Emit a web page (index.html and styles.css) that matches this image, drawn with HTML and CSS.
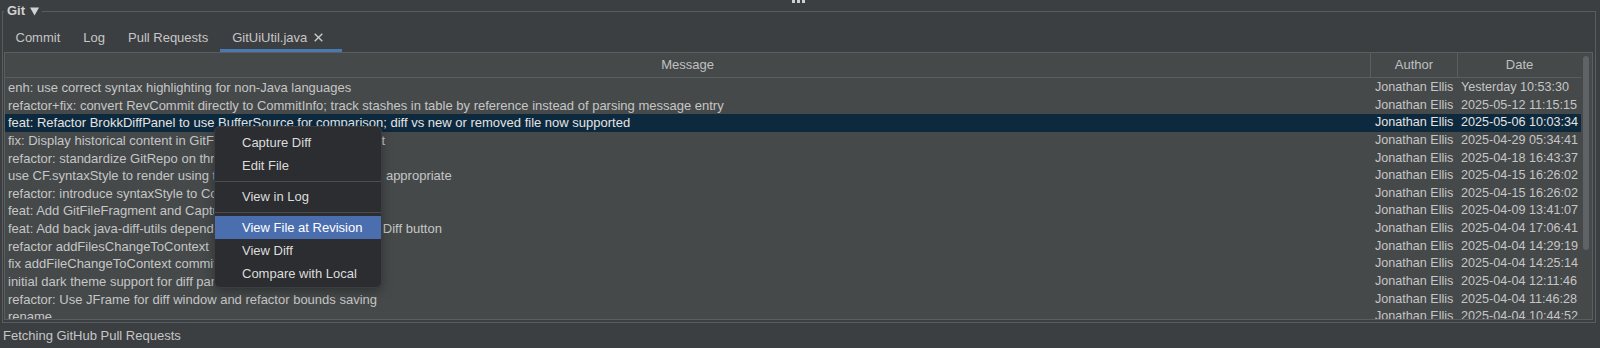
FILE: index.html
```html
<!DOCTYPE html>
<html lang="en">
<head>
<meta charset="utf-8">
<title>Git</title>
<link rel="stylesheet" href="styles.css">
</head>
<body>
<div class="grip"><i></i><i></i><i></i></div>
<fieldset class="git">
  <legend class="git-title">Git<svg class="caret" width="9" height="9" viewBox="0 0 9 9"><path d="M0 0.5H9L4.5 8.5Z"/></svg></legend>
  <nav class="tabs">
    <div class="tab">Commit</div>
    <div class="tab">Log</div>
    <div class="tab">Pull Requests</div>
    <div class="tab active">GitUiUtil.java<svg class="close" width="9" height="9" viewBox="0 0 9 9"><path d="M0.7 0.7L8.3 8.3M8.3 0.7L0.7 8.3"/></svg></div>
  </nav>
  <section class="pane">
    <div class="table">
      <div class="row thead">
        <div class="th">Message</div>
        <div class="th">Author</div>
        <div class="th">Date</div>
      </div>
      <div class="tbody">
        <div class="row"><div class="msg">enh: use correct syntax highlighting for non-Java languages</div><div class="author">Jonathan Ellis</div><div class="date">Yesterday 10:53:30</div></div>
        <div class="row"><div class="msg">refactor+fix: convert RevCommit directly to CommitInfo; track stashes in table by reference instead of parsing message entry</div><div class="author">Jonathan Ellis</div><div class="date">2025-05-12 11:15:15</div></div>
        <div class="row selected"><div class="msg">feat: Refactor BrokkDiffPanel to use BufferSource for comparison; diff vs new or removed file now supported</div><div class="author">Jonathan Ellis</div><div class="date">2025-05-06 10:03:34</div></div>
        <div class="row"><div class="msg">fix: Display historical content in GitFileFragment as of that commit</div><div class="author">Jonathan Ellis</div><div class="date">2025-04-29 05:34:41</div></div>
        <div class="row"><div class="msg">refactor: standardize GitRepo on throwing GitAPIException</div><div class="author">Jonathan Ellis</div><div class="date">2025-04-18 16:43:37</div></div>
        <div class="row"><div class="msg">use CF.syntaxStyle to render using the proper syntax style where appropriate</div><div class="author">Jonathan Ellis</div><div class="date">2025-04-15 16:26:02</div></div>
        <div class="row"><div class="msg">refactor: introduce syntaxStyle to ContextFragment</div><div class="author">Jonathan Ellis</div><div class="date">2025-04-15 16:26:02</div></div>
        <div class="row"><div class="msg">feat: Add GitFileFragment and Capture Diff action</div><div class="author">Jonathan Ellis</div><div class="date">2025-04-09 13:41:07</div></div>
        <div class="row"><div class="msg">feat: Add back java-diff-utils dependency and re-add the Capture Diff button</div><div class="author">Jonathan Ellis</div><div class="date">2025-04-04 17:06:41</div></div>
        <div class="row"><div class="msg">refactor addFilesChangeToContext</div><div class="author">Jonathan Ellis</div><div class="date">2025-04-04 14:29:19</div></div>
        <div class="row"><div class="msg">fix addFileChangeToContext committing stale files</div><div class="author">Jonathan Ellis</div><div class="date">2025-04-04 14:25:14</div></div>
        <div class="row"><div class="msg">initial dark theme support for diff panel</div><div class="author">Jonathan Ellis</div><div class="date">2025-04-04 12:11:46</div></div>
        <div class="row"><div class="msg">refactor: Use JFrame for diff window and refactor bounds saving</div><div class="author">Jonathan Ellis</div><div class="date">2025-04-04 11:46:28</div></div>
        <div class="row"><div class="msg">rename</div><div class="author">Jonathan Ellis</div><div class="date">2025-04-04 10:44:52</div></div>
      </div>
    </div>
    <div class="vscroll"><div class="thumb"></div></div>
  </section>
</fieldset>
<footer class="status">Fetching GitHub Pull Requests</footer>

<div class="menu">
  <div class="menu-item">Capture Diff</div>
  <div class="menu-item">Edit File</div>
  <div class="menu-sep"></div>
  <div class="menu-item">View in Log</div>
  <div class="menu-sep"></div>
  <div class="menu-item hover">View File at Revision</div>
  <div class="menu-item">View Diff</div>
  <div class="menu-item">Compare with Local</div>
</div>
</body>
</html>
```

FILE: styles.css
```css
html, body {
  margin: 0;
  padding: 0;
}

body {
  position: relative;
  width: 1600px;
  height: 348px;
  overflow: hidden;
  background: #3c3f41;
  color: #bbbbbb;
  font-family: "Liberation Sans", Arial, sans-serif;
  font-size: 13px;
}

/* drag handle */
.grip {
  height: 4px;
  display: flex;
  justify-content: center;
  gap: 2px;
  padding-right: 4px;
}
.grip i {
  width: 3px;
  height: 3px;
  background: #cfcfcf;
}

/* titled border */
.git {
  margin: 0 4px 0 2px;
  padding: 0 0 2px;
  border: 1px solid #5a5d5f;
  min-width: 0;
}
.git-title {
  margin-left: 1px;
  padding: 0 3px;
  font-weight: bold;
  font-size: 13px;
  line-height: 14px;
  color: #d2d2d2;
}
.caret {
  margin-left: 5px;
  vertical-align: -1px;
  fill: #d2d2d2;
}

/* tabs */
.tabs {
  display: flex;
  height: 34px;
  padding-left: 1px;
}
.tab {
  box-sizing: border-box;
  height: 34px;
  padding: 8px 11.5px 0;
  display: flex;
  align-items: center;
  border-bottom: 3px solid transparent;
  color: #c6c6c6;
  white-space: nowrap;
}
.tab.active {
  padding: 8px 19px 0 12.5px;
  border-bottom-color: #4a78b0;
}
.close {
  margin-left: 7px;
  stroke: #c8c8c8;
  stroke-width: 1.4;
}

/* table pane */
.pane {
  box-sizing: border-box;
  height: 268px;
  margin: 0 2px 0 1px;
  border: 1px solid #5b5e60;
  background: #45494a;
  display: flex;
}
.table {
  flex: 1;
  min-width: 0;
  display: flex;
  flex-direction: column;
}
.row {
  display: grid;
  grid-template-columns: 1366px 87px 1fr;
  height: 17.64px;
  line-height: 17.64px;
  white-space: nowrap;
}
.row > div {
  overflow: hidden;
}
.thead {
  height: 25px;
  line-height: 24px;
  box-sizing: border-box;
  border-bottom: 1px solid #5b5e60;
  flex: none;
}
.th {
  text-align: center;
  color: #c0c0c0;
}
.th:not(:last-child) {
  border-right: 1px solid #5b5e60;
}
.tbody {
  flex: 1;
  min-height: 0;
  overflow: hidden;
  padding-top: 1px;
}
.msg {
  padding-left: 3px;
  color: #c6c6c6;
}
.author {
  padding-left: 4px;
  font-size: 12.6px;
  color: #c6c6c6;
}
.date {
  padding-left: 3px;
  font-size: 12.6px;
  color: #c6c6c6;
}
.row.selected {
  background: #0d293e;
}
.row.selected > div {
  color: #e4e4e4;
}

.vscroll {
  width: 11px;
  flex: none;
}
.thumb {
  width: 6px;
  height: 194px;
  margin: 3px 0 0 2px;
  border-radius: 3px;
  background: #5f6366;
}

/* status line */
.status {
  height: 25px;
  line-height: 25px;
  padding-left: 3px;
  color: #c6c6c6;
}

/* popup menu */
.menu {
  position: absolute;
  left: 215px;
  top: 127px;
  width: 166px;
  box-sizing: border-box;
  padding: 4px 0 2px;
  background: #2b2d30;
  border-radius: 5px;
  box-shadow: 0 0 0 1px #3b3d40, 0 4px 12px rgba(0, 0, 0, 0.35);
  color: #dcdcdc;
}
.menu-item {
  height: 23px;
  line-height: 23px;
  padding-left: 27px;
  white-space: nowrap;
}
.menu-item.hover {
  background: #4b6eaf;
  color: #ffffff;
}
.menu-sep {
  height: 1px;
  margin: 4px 0 3px;
  background: #4b4d51;
}
```
